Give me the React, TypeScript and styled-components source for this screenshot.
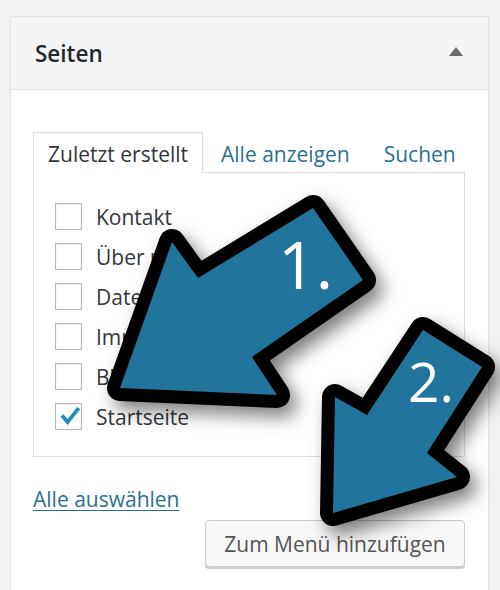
import React from "react";
import styled, { createGlobalStyle } from "styled-components";

const Global = createGlobalStyle`
  html, body { margin: 0; padding: 0; }
  body {
    background: #f1f1f1;
    font-family: "Open Sans", "Noto Sans", "Liberation Sans", sans-serif;
    overflow: hidden;
  }
`;

const Page = styled.div`
  position: relative;
  width: 500px;
  height: 590px;
  padding: 16px 11px 0 10px;
  box-sizing: border-box;
  overflow: hidden;
`;

const Panel = styled.div`
  background: #fff;
  border: 1px solid #e3e3e3;
  height: 620px;
  box-sizing: border-box;
`;

const Header = styled.div`
  display: flex;
  align-items: center;
  justify-content: space-between;
  height: 72px;
  padding: 0 25px 0 24px;
  background: #f5f5f5;
  border-bottom: 1px solid #e2e2e2;
`;

const Title = styled.h2`
  margin: 0;
  font-size: 22.5px;
  font-weight: 600;
  color: #23282d;
`;

const Toggle = styled.span`
  width: 0;
  height: 0;
  border-left: 7px solid transparent;
  border-right: 7px solid transparent;
  border-bottom: 9px solid #6c6c6c;
  margin-top: -3px;
`;

const Body = styled.div`
  padding: 42px 23px 0 22px;
`;

const Tabs = styled.div`
  display: flex;
  align-items: flex-end;
  margin-bottom: -1px;
  position: relative;
`;

const Tab = styled.a<{ $active?: boolean }>`
  display: flex;
  align-items: center;
  height: 41px;
  box-sizing: border-box;
  font-size: 21px;
  text-decoration: none;
  white-space: nowrap;
  color: ${(p) => (p.$active ? "#32373c" : "#2a7094")};
  background: ${(p) => (p.$active ? "#fff" : "transparent")};
  border: 1px solid ${(p) => (p.$active ? "#dcdcdc" : "transparent")};
  border-bottom: none;
  padding: 2px ${(p) => (p.$active ? "14px" : "0")} 0;
  margin-right: ${(p) => (p.$active ? "17px" : "32px")};
`;

const TabPanel = styled.div`
  border: 1px solid #dcdcdc;
  height: 285px;
  box-sizing: border-box;
  padding: 30px 0 0 21px;
  display: flex;
  flex-direction: column;
  gap: 13px;
`;

const Row = styled.label`
  display: flex;
  align-items: center;
  gap: 14px;
  height: 27px;
  font-size: 21px;
  color: #32373c;
`;

const Box = styled.span`
  width: 27px;
  height: 27px;
  box-sizing: border-box;
  border: 1px solid #b4b9be;
  background: #fff;
  box-shadow: inset 0 1px 2px rgba(0, 0, 0, 0.08);
  display: flex;
  align-items: center;
  justify-content: center;
  flex-shrink: 0;
`;

const Footer = styled.div`
  display: flex;
  flex-direction: column;
  padding-top: 29px;
`;

const SelectAll = styled.a`
  font-size: 21px;
  color: #2a7094;
  text-decoration: underline;
  text-underline-offset: 3px;
  text-decoration-thickness: 1px;
  align-self: flex-start;
  line-height: 27px;
`;

const AddButton = styled.button`
  align-self: flex-end;
  margin-top: 7px;
  width: 260px;
  height: 47px;
  border: 1px solid #cbcbcb;
  border-radius: 4px;
  background: #f7f7f7;
  box-shadow: 0 2px 0 #cfcfcf;
  color: #555;
  font-family: inherit;
  font-size: 21px;
  padding: 0;
  white-space: nowrap;
`;

const Overlay = styled.svg`
  position: absolute;
  left: 0;
  top: 0;
  pointer-events: none;
`;

const NumberText = styled.text`
  fill: #fff;
  font-family: "Open Sans", "Noto Sans", sans-serif;
  font-weight: 400;
`;

const Check = () => (
  <svg width="27" height="27" viewBox="0 0 27 27">
    <path
      d="M6.5 12.5 L12.5 19.5 L24.5 4.5"
      fill="none"
      stroke="#1e8cbe"
      strokeWidth="4"
      strokeLinecap="butt"
      strokeLinejoin="miter"
    />
  </svg>
);

const arrow1 = "120,388 172,242 198,278 313,208 363,280 252,357 277,395";
const arrow2 = "333,513 335,397 367,415 423,330 482,367 427,453 457,477";

const Arrows = () => (
  <Overlay width="500" height="590" viewBox="0 0 500 590">
    <defs>
      <filter id="sh" x="-30%" y="-30%" width="160%" height="160%">
        <feDropShadow dx="7" dy="9" stdDeviation="9" floodColor="#000" floodOpacity="0.5" />
      </filter>
    </defs>
    {[arrow1, arrow2].map((pts) => (
      <g key={pts}>
        <polygon
          points={pts}
          fill="#000"
          stroke="#000"
          strokeWidth="26"
          strokeLinejoin="round"
          filter="url(#sh)"
        />
        <polygon points={pts} fill="#21749b" />
      </g>
    ))}
    <NumberText x="278" y="289" fontSize="66">1.</NumberText>
    <NumberText x="408" y="402" fontSize="55">2.</NumberText>
  </Overlay>
);

const pages = ["Kontakt", "Über uns", "Datenschutz", "Impressum", "Blog", "Startseite"];

export default function App() {
  return (
    <>
      <Global />
      <Page>
        <Panel>
          <Header>
            <Title>Seiten</Title>
            <Toggle />
          </Header>
          <Body>
            <Tabs>
              <Tab $active>Zuletzt erstellt</Tab>
              <Tab>Alle anzeigen</Tab>
              <Tab>Suchen</Tab>
            </Tabs>
            <TabPanel>
              {pages.map((p) => (
                <Row key={p}>
                  <Box>{p === "Startseite" && <Check />}</Box>
                  {p}
                </Row>
              ))}
            </TabPanel>
            <Footer>
              <SelectAll>Alle auswählen</SelectAll>
              <AddButton>Zum Menü hinzufügen</AddButton>
            </Footer>
          </Body>
        </Panel>
        <Arrows />
      </Page>
    </>
  );
}
